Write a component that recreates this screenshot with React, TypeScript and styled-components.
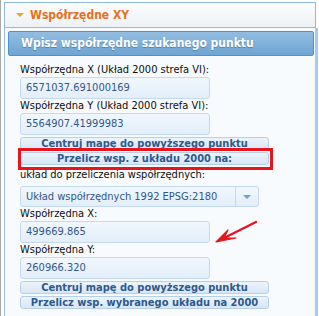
import React from 'react';
import styled, {createGlobalStyle} from 'styled-components';

const GlobalStyle = createGlobalStyle`
    html, body {
        margin: 0;
        padding: 0;
        background: #ffffff;
    }
    body {
        font-family: "DejaVu Sans Condensed", "Liberation Sans", sans-serif;
    }
`;

export default function App() {
    return (
        <Page>
            <GlobalStyle/>
            <Panel>
                <Header>
                    <Caret/>
                    <Title>Współrzędne XY</Title>
                </Header>
                <Body>
                    <Bar>Wpisz współrzędne szukanego punktu</Bar>
                    <Form>
                        <Label>Współrzędna X (Układ 2000 strefa VI):</Label>
                        <Input>6571037.691000169</Input>
                        <Label>Współrzędna Y (Układ 2000 strefa VI):</Label>
                        <Input>5564907.41999983</Input>
                        <Button $top={2}>Centruj mapę do powyższego punktu</Button>
                        <Marked>
                            <Button $top={0}>Przelicz wsp. z układu 2000 na:</Button>
                            <Highlight/>
                        </Marked>
                        <Label $top={3}>układ do przeliczenia współrzędnych:</Label>
                        <Select>
                            <SelectValue>Układ współrzędnych 1992 EPSG:2180</SelectValue>
                            <SelectArrow><Down/></SelectArrow>
                        </Select>
                        <Label>Współrzędna X:</Label>
                        <Input>499669.865</Input>
                        <Label>Współrzędna Y:</Label>
                        <Input>260966.320</Input>
                        <Button $top={2}>Centruj mapę do powyższego punktu</Button>
                        <Button $top={2}>Przelicz wsp. wybranego układu na 2000</Button>
                    </Form>
                </Body>
            </Panel>
            <Pointer width="50" height="28" viewBox="0 0 50 28">
                <path d="M45 4 L7 23" stroke="#e8151c" strokeWidth="2.4" strokeLinecap="round" fill="none"/>
                <path d="M5 24 L17 12 L13 20 L25 20 Z" fill="#e8151c" stroke="#e8151c" strokeWidth="1.2"
                      strokeLinejoin="round"/>
            </Pointer>
        </Page>
    );
}

const Page = styled.div`
    position: relative;
    width: 319px;
    height: 316px;
    overflow: hidden;
    box-sizing: border-box;
    border-left: 1px solid #a8a8a8;
    padding: 2px 0 0 3px;
`;

const Panel = styled.div`
    width: 312px;
    height: 100%;
    display: flex;
    flex-direction: column;
`;

const Header = styled.div`
    height: 24px;
    border: 1px solid #8fbae4;
    background: linear-gradient(#fbfcfd, #eef2f5);
    display: flex;
    align-items: center;
    padding-left: 11px;
    gap: 6px;
`;

const Caret = styled.span`
    width: 0;
    height: 0;
    border-left: 4px solid transparent;
    border-right: 4px solid transparent;
    border-top: 4px solid #f2a227;
`;

const Title = styled.span`
    font-size: 12px;
    font-weight: bold;
    color: #e8701a;
`;

const Body = styled.div`
    flex: 1;
    margin-right: -2px;
    border-left: 1px solid #9cc0e6;
    border-right: 3px solid #a9cbea;
    background: #f8fbfe;
    padding: 3px 1px 0 3px;
`;

const Bar = styled.div`
    height: 23px;
    border: 1px solid #4f90d0;
    border-radius: 2px;
    background: linear-gradient(#93bde0, #6ea5d4);
    color: #ffffff;
    font-size: 12px;
    font-weight: bold;
    line-height: 23px;
    padding-left: 12px;
    text-shadow: 0 1px 1px rgba(30, 70, 120, 0.45);
`;

const Form = styled.div`
    display: flex;
    flex-direction: column;
    align-items: flex-start;
    padding: 7px 0 0 12px;
`;

const Label = styled.div<{ $top?: number }>`
    margin-top: ${p => p.$top ?? 0}px;
    font-size: 11px;
    line-height: 14px;
    color: #0d0d0d;
    white-space: nowrap;
`;

const Input = styled.div`
    box-sizing: border-box;
    width: 190px;
    height: 22px;
    border: 1px solid #c4daf0;
    border-radius: 3px;
    background: linear-gradient(#f1f7fd, #e2eefa);
    padding-left: 5px;
    font-size: 11px;
    line-height: 20px;
    color: #34568a;
`;

const Button = styled.div<{ $top: number }>`
    box-sizing: border-box;
    margin-top: ${p => p.$top}px;
    width: 249px;
    height: 13px;
    border: 1px solid #b7d0ea;
    border-radius: 3px;
    background: linear-gradient(#ecf4fc, #d7e6f6);
    color: #2d5a8c;
    font-size: 11px;
    font-weight: bold;
    line-height: 11px;
    text-align: center;
    white-space: nowrap;
    overflow: hidden;
`;

const Marked = styled.div`
    position: relative;
    margin-top: 2px;
`;

const Highlight = styled.div`
    position: absolute;
    top: -4px;
    left: -2px;
    right: -4px;
    bottom: -5px;
    border: 3px solid #e8151c;
`;

const Select = styled.div`
    box-sizing: border-box;
    margin-top: 4px;
    width: 239px;
    height: 21px;
    border: 1px solid #c4daf0;
    border-radius: 3px;
    background: linear-gradient(#f1f7fd, #e2eefa);
    display: flex;
`;

const SelectValue = styled.div`
    flex: 1;
    padding-left: 5px;
    font-size: 11px;
    line-height: 19px;
    color: #34568a;
    white-space: nowrap;
`;

const SelectArrow = styled.div`
    width: 22px;
    border-left: 1px solid #c4daf0;
    display: flex;
    align-items: center;
    justify-content: center;
`;

const Down = styled.span`
    width: 0;
    height: 0;
    border-left: 4px solid transparent;
    border-right: 4px solid transparent;
    border-top: 4px solid #7d9dbf;
`;

const Pointer = styled.svg`
    position: absolute;
    left: 210px;
    top: 218px;
`;
